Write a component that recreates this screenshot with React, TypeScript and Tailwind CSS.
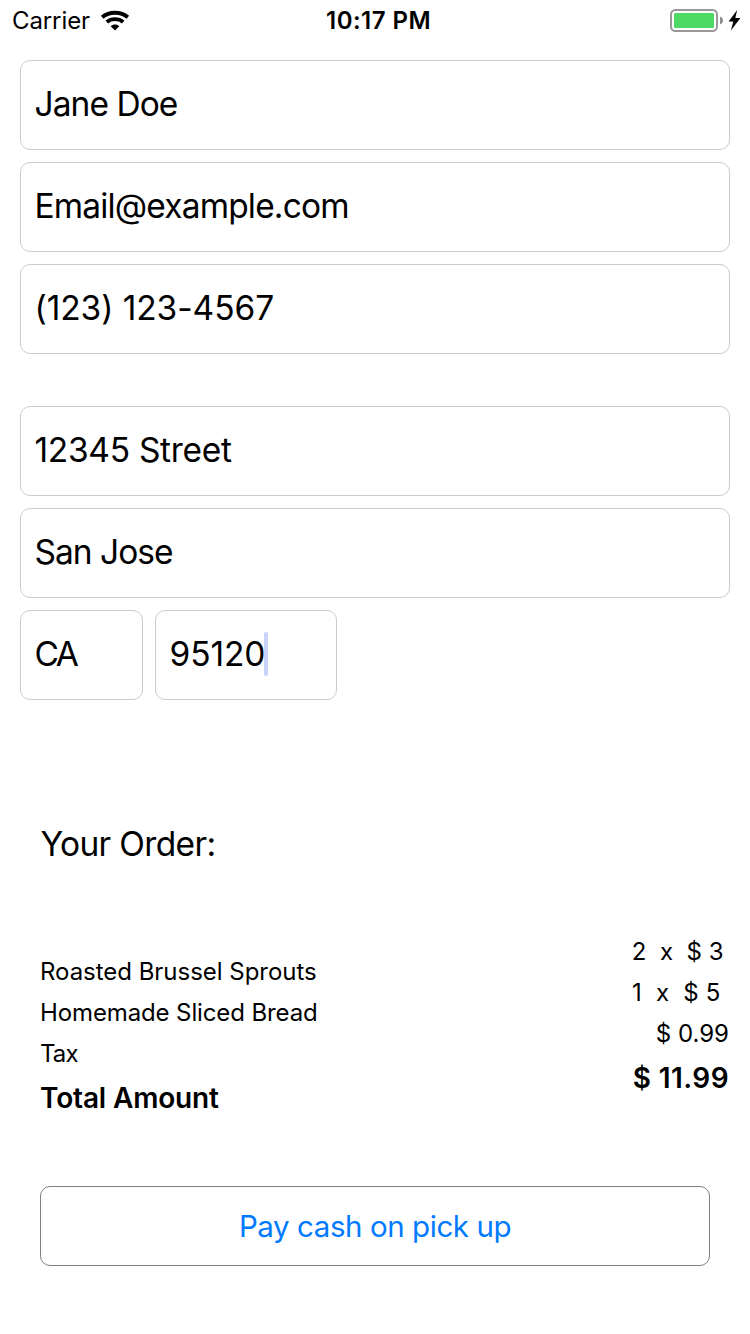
import React from "react";

type FieldProps = { value: string; className?: string; textClass?: string; caret?: boolean };

function Field({ value, className = "", textClass = "", caret }: FieldProps) {
  return (
    <div className={`flex h-[90px] items-center rounded-[10px] border border-[#cccccc] pl-[13.5px] text-[33.5px] leading-[40px] ${className}`}>
      <span className={`-mt-0.5 whitespace-pre ${textClass}`}>{value}</span>
      {caret && <span className="-ml-[1.5px] -mt-0.5 h-11 w-1 rounded-sm bg-[#c7d3fb]" />}
    </div>
  );
}

function WifiIcon() {
  return (
    <svg className="ml-[10px]" width="30" height="22" viewBox="0 0 30 22" fill="none" stroke="black">
      <path d="M2.2 7.2C9.2 1.1 20.8 1.1 27.8 7.2" strokeWidth="4" />
      <path d="M6.8 12C11.2 8.1 18.8 8.1 23.2 12" strokeWidth="3.9" />
      <path d="M10.7 16.2C13.1 13.8 16.9 13.8 19.3 16.2L15 20.6Z" fill="black" stroke="none" />
    </svg>
  );
}

function BatteryIcon() {
  return (
    <svg width="72" height="24" viewBox="0 0 72 24">
      <rect x="1" y="1" width="46" height="21" rx="4.5" fill="none" stroke="#999999" strokeWidth="2" />
      <rect x="4" y="4" width="40" height="15" rx="1.5" fill="#4cd964" />
      <path d="M50 7.5C54 9 54 14 50 15.5Z" fill="#8c8c8c" />
      <path d="M67.2 1L58.6 12.6H63.3L60.9 21.5L70.4 9H65.3Z" fill="black" />
    </svg>
  );
}

export default function App() {
  return (
    <main className="flex h-[1334px] w-[750px] flex-col overflow-hidden bg-white font-['Inter',sans-serif] text-black">
      <header className="flex h-10 items-center justify-between pl-3 pr-2 pt-px text-[24px] leading-[40px]">
        <div className="flex w-[314px] items-center">
          <span className="tracking-[-0.1px]">Carrier</span>
          <WifiIcon />
        </div>
        <span className="flex-1 whitespace-pre text-left font-semibold tracking-[0.48px]">10:17 PM</span>
        <BatteryIcon />
      </header>
      <section className="flex flex-col gap-3 px-5 pt-5">
        <Field value="Jane Doe" textClass="tracking-[-0.95px]" />
        <Field value="Email@example.com" textClass="tracking-[-0.84px]" />
        <Field value="(123) 123-4567" textClass="tracking-[-0.07px]" />
        <Field value="12345 Street" className="mt-10" textClass="tracking-[-0.3px]" />
        <Field value="San Jose" textClass="tracking-[-1px]" />
        <div className="flex gap-3">
          <Field value="CA" className="w-[123px]" textClass="tracking-[-2.6px]" />
          <Field value="95120" className="w-[182px]" textClass="tracking-[-0.1px]" caret />
        </div>
      </section>
      <h1 className="mt-[124px] pl-[40.5px] text-[33.5px] leading-[40px] tracking-[-0.65px]">Your Order:</h1>
      <section className="mt-[67px] flex justify-between pl-10 pr-[21px] text-[24px] leading-[41px]">
        <div className="flex flex-col items-start pt-5">
          <span className="tracking-[-0.03px]">Roasted Brussel Sprouts</span>
          <span className="tracking-[-0.12px]">Homemade Sliced Bread</span>
          <span className="tracking-[-0.9px]">Tax</span>
          <span className="text-[28px] font-semibold leading-[48px] tracking-[-0.15px]">Total Amount</span>
        </div>
        <div className="flex flex-col items-end">
          <span className="whitespace-pre pr-[5.5px]">2  x  $ 3</span>
          <span className="whitespace-pre pr-[8.5px] tracking-[0.2px]">1  x  $ 5</span>
          <span>$ 0.99</span>
          <span className="text-[28px] font-semibold leading-[48px] tracking-[0.4px]">$ 11.99</span>
        </div>
      </section>
      <button className="mx-10 mt-[64px] h-20 rounded-[10px] border border-[#808080] pt-px text-[29.5px] tracking-[-0.43px] text-[#007aff]">Pay cash on pick up</button>
    </main>
  );
}
